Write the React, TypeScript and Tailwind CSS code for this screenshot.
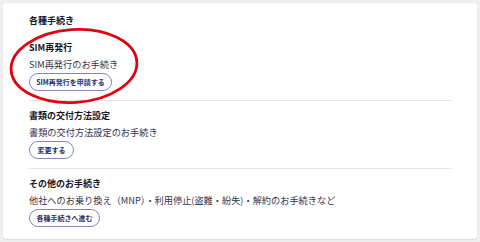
import React from "react";

const font = { fontFamily: '"Noto Sans CJK JP", "Noto Sans", sans-serif' };

function Section({
  title,
  desc,
  button,
  btnW,
  last,
  first,
}: {
  title: string;
  desc: string;
  button: string;
  btnW: string;
  last?: boolean;
  first?: boolean;
}) {
  return (
    <div
      className={`${first ? "pt-0" : "pt-[9px]"} ${last ? "" : "pb-[9px] border-b border-[#e4e2ef]"}`}
    >
      <div className="text-[9px] leading-[12px] font-bold text-[#16161f]">{title}</div>
      <div className="mt-[4px] text-[9.2px] leading-[12px] text-[#33334a]">{desc}</div>
      <button
        className={`mt-[3px] h-[18px] ${btnW} rounded-full border border-[#8482c6] bg-white flex items-center justify-center text-[7px] font-bold text-[#2e2d6b] leading-none`}
      >
        {button}
      </button>
    </div>
  );
}

export default function App() {
  return (
    <div className="relative w-[480px] h-[242px] bg-[#efefef] pt-[3px] pl-[3px]" style={font}>
      <div className="w-[474px] h-[236px] bg-white rounded-[4px] shadow-[0_1px_2px_rgba(0,0,0,0.08)] px-[26px] pt-[12px]">
        <div className="text-[9px] leading-[12px] font-bold text-[#16161f]">各種手続き</div>
        <div className="mt-[15px]">
          <Section first title="SIM再発行" desc="SIM再発行のお手続き" button="SIM再発行を申請する" btnW="w-[83px]" />
          <Section title="書類の交付方法設定" desc="書類の交付方法設定のお手続き" button="変更する" btnW="w-[45px]" />
          <Section
            title="その他のお手続き"
            desc="他社へのお乗り換え（MNP）・利用停止(盗難・紛失)・解約のお手続きなど"
            button="各種手続きへ進む"
            btnW="w-[71px]"
            last
          />
        </div>
      </div>
      <svg className="absolute left-0 top-0 pointer-events-none" width="480" height="242">
        <ellipse cx="74" cy="66" rx="63" ry="36.5" fill="none" stroke="#e3000f" strokeWidth="2.8" transform="rotate(-4 74 66)" />
      </svg>
    </div>
  );
}
